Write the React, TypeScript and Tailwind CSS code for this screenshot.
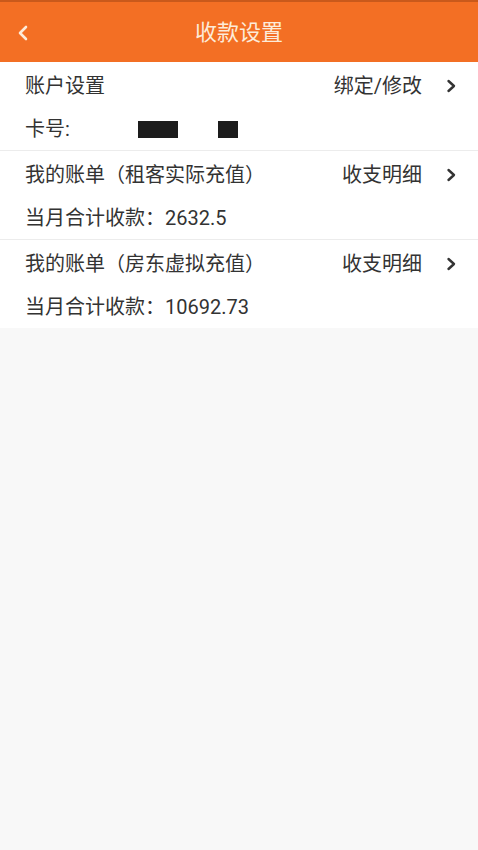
const font = { fontFamily: 'Roboto, "Noto Sans CJK SC", "Noto Sans", sans-serif' };

function Chevron() {
  return (
    <svg width="10" height="14" viewBox="0 0 10 14" className="shrink-0">
      <path d="M2.5 2 L8 7 L2.5 12" fill="none" stroke="#333" strokeWidth="2.4" strokeLinecap="round" strokeLinejoin="round" />
    </svg>
  );
}

type Row = {
  title: string;
  action: string;
  amount: string;
};

const bills: Row[] = [
  { title: "我的账单（租客实际充值）", action: "收支明细", amount: "2632.5" },
  { title: "我的账单（房东虚拟充值）", action: "收支明细", amount: "10692.73" },
];

function RowHead({ title, action }: { title: string; action: string }) {
  return (
    <div className="flex h-[45px] items-center justify-between pt-[3px]">
      <span>{title}</span>
      <div className="flex items-center gap-[24px]">
        <span>{action}</span>
        <Chevron />
      </div>
    </div>
  );
}

export default function App() {
  return (
    <div className="min-h-[850px] w-full bg-[#f8f8f8] text-[20px] text-[#333]" style={font}>
      {/* Header */}
      <div className="border-t-[2px] border-[#c9591b] bg-[#f36f24]">
        <div className="relative flex h-[60px] items-center justify-center">
          <svg width="12" height="16" viewBox="0 0 12 16" className="absolute left-[17px] top-[23px]">
            <path d="M9 2 L3 8 L9 14" fill="none" stroke="#fdebd9" strokeWidth="2.6" strokeLinecap="round" strokeLinejoin="round" />
          </svg>
          <span className="text-[22px] text-[#fdebd9]">收款设置</span>
        </div>
      </div>

      {/* Account */}
      <div className="bg-white pl-[25px] pr-[22px]">
        <RowHead title="账户设置" action="绑定/修改" />
        <div className="flex h-[43px] items-center pt-px">
          <span className="w-[113px]">卡号:</span>
          <div className="h-[17px] w-[40px] bg-[#1c1c1c]" />
          <div className="ml-[40px] h-[17px] w-[20px] bg-[#1c1c1c]" />
        </div>
      </div>

      {bills.map((b) => (
        <div key={b.title} className="border-t border-[#ececec] bg-white pl-[25px] pr-[22px]">
          <RowHead title={b.title} action={b.action} />
          <div className="flex h-[43px] items-center pt-px">
            <span>当月合计收款：{b.amount}</span>
          </div>
        </div>
      ))}
    </div>
  );
}
